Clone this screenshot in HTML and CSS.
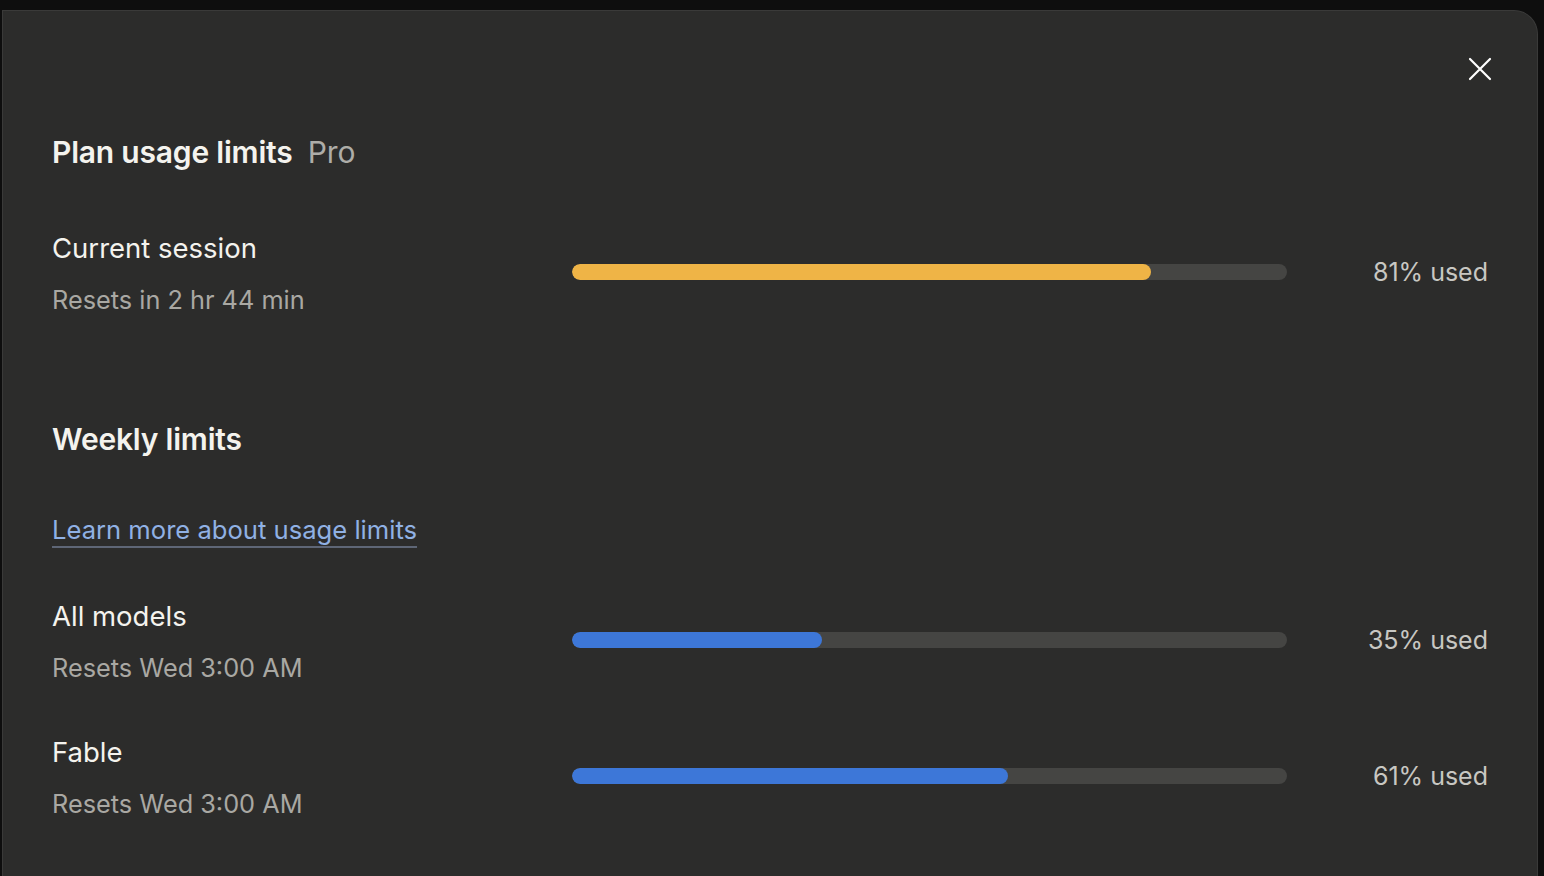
FILE: index.html
```html
<!DOCTYPE html>
<html lang="en">
<head>
    <meta charset="UTF-8">
    <meta name="viewport" content="width=device-width, initial-scale=1.0">
    <title>Plan usage limits</title>
    <link rel="stylesheet" href="styles.css">
</head>
<body>
    <div class="panel">
        <button class="close" aria-label="Close">
            <svg width="24" height="24" viewBox="0 0 24 24" fill="none" stroke="#ffffff" stroke-width="2.2" stroke-linecap="round">
                <path d="M2 2 L22 22 M22 2 L2 22"/>
            </svg>
        </button>

        <h2 class="heading">Plan usage limits <span class="plan">Pro</span></h2>

        <div class="usage-row first">
            <div class="info">
                <div class="label">Current session</div>
                <div class="sub">Resets in 2 hr 44 min</div>
            </div>
            <div class="track"><div class="fill yellow" style="width: 81%"></div></div>
            <div class="pct">81% used</div>
        </div>

        <h2 class="heading weekly">Weekly limits</h2>

        <a href="#" class="learn">Learn more about usage limits</a>

        <div class="usage-row models">
            <div class="info">
                <div class="label">All models</div>
                <div class="sub">Resets Wed 3:00 AM</div>
            </div>
            <div class="track"><div class="fill blue" style="width: 35%"></div></div>
            <div class="pct">35% used</div>
        </div>

        <div class="usage-row">
            <div class="info">
                <div class="label">Fable</div>
                <div class="sub">Resets Wed 3:00 AM</div>
            </div>
            <div class="track"><div class="fill blue" style="width: 61%"></div></div>
            <div class="pct">61% used</div>
        </div>
    </div>
</body>
</html>
```

FILE: styles.css
```css
body {
    margin: 0;
    padding: 10px 6px 0 2px;
    background: #0e0e0e;
    font-family: Inter, "Noto Sans", sans-serif;
    height: 866px;
    overflow: hidden;
}

.panel {
    position: relative;
    background: #2c2c2b;
    border: 1px solid #3a3a39;
    border-bottom: none;
    border-radius: 0 24px 0 0;
    height: 866px;
    box-sizing: border-box;
    padding: 123px 49px 0 49px;
    color: #f4f3ee;
}

.close {
    position: absolute;
    top: 46px;
    right: 45px;
    background: none;
    border: none;
    padding: 0;
    width: 24px;
    height: 24px;
    cursor: pointer;
}

.heading {
    margin: 0;
    font-size: 30px;
    line-height: 36px;
    font-weight: 600;
    letter-spacing: -0.2px;
}

.plan {
    margin-left: 8px;
    font-weight: 400;
    color: #aeada8;
}

.usage-row {
    display: flex;
    align-items: center;
    margin-bottom: 48px;
}

.usage-row.first {
    margin-top: 60px;
    margin-bottom: 103px;
}

.info {
    width: 520px;
    flex-shrink: 0;
    display: flex;
    flex-direction: column;
    gap: 16px;
}

.label {
    font-size: 27.5px;
    line-height: 36px;
    color: #f4f3ee;
}

.sub {
    font-size: 25.3px;
    line-height: 36px;
    color: #a9a8a3;
}

.track {
    width: 715px;
    height: 16px;
    margin-top: -4px;
    border-radius: 8px;
    background: #454543;
    overflow: hidden;
}

.fill {
    height: 100%;
    border-radius: 8px;
}

.fill.yellow {
    background: #efb446;
}

.fill.blue {
    background: #3d77d8;
}

.pct {
    flex: 1;
    margin-top: -4px;
    text-align: right;
    font-size: 25px;
    color: #c8c7c2;
}

.weekly {
    margin-bottom: 55px;
}

.learn {
    display: inline-block;
    font-size: 25.6px;
    line-height: 36px;
    color: #90b1e4;
    text-decoration: underline;
    text-decoration-color: #5e6676;
    text-decoration-thickness: 2px;
    text-underline-offset: 7px;
    margin-bottom: 50px;
}
```
